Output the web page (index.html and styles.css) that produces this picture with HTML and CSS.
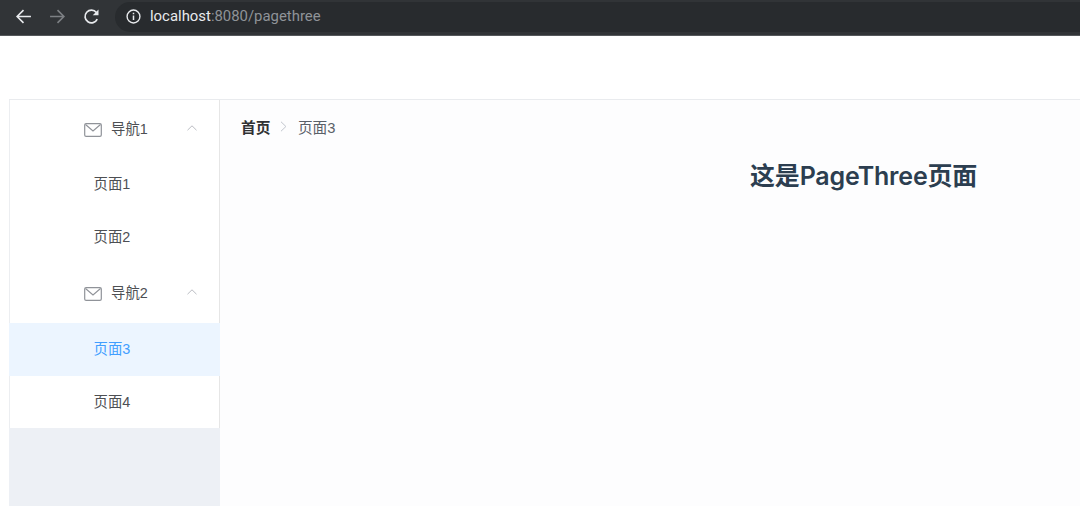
FILE: index.html
```html
<!DOCTYPE html>
<html lang="zh">
<head>
<meta charset="utf-8">
<title>pagethree</title>
<link rel="stylesheet" href="styles.css">
</head>
<body>
<header class="chrome">
  <svg class="nav-icon" viewBox="0 0 16 16"><path d="M15 8H2M8 2L2 8l6 6" fill="none" stroke="#e8eaed" stroke-width="1.5"/></svg>
  <svg class="nav-icon dim" viewBox="0 0 16 16"><path d="M1 8h13M8 2l6 6-6 6" fill="none" stroke="#7d8084" stroke-width="1.5"/></svg>
  <svg class="nav-icon" viewBox="0 0 16 16"><path d="M13.4 10.5A6 6 0 1 1 12.6 4.2" fill="none" stroke="#e8eaed" stroke-width="1.6"/><path d="M14.6 1.4v5.4H9.2z" fill="#e8eaed"/></svg>
  <div class="omnibox">
    <svg class="info" viewBox="0 0 14 14"><circle cx="7" cy="7" r="6" fill="none" stroke="#e8eaed" stroke-width="1.3"/><path d="M7 6v4.2M7 3.6v1.4" stroke="#e8eaed" stroke-width="1.4"/></svg>
    <span class="host">localhost</span><span class="path">:8080/pagethree</span>
  </div>
</header>
<main class="page">
  <aside class="sidebar">
    <ul class="menu">
      <li class="menu-title">
        <svg class="mail" viewBox="0 0 18 14"><rect x="0.7" y="0.7" width="16.6" height="12.6" rx="1.4" fill="none" stroke="#909399" stroke-width="1.2"/><path d="M1.5 1.5L9 8l7.5-6.5" fill="none" stroke="#909399" stroke-width="1.1"/></svg>
        <span class="title-text">导航1</span>
        <svg class="caret" viewBox="0 0 10 6"><path d="M.5 5.2L5 .8l4.5 4.4" fill="none" stroke="#a8abb2" stroke-width="0.8"/></svg>
      </li>
      <li class="menu-item">页面1</li>
      <li class="menu-item">页面2</li>
      <li class="menu-title">
        <svg class="mail" viewBox="0 0 18 14"><rect x="0.7" y="0.7" width="16.6" height="12.6" rx="1.4" fill="none" stroke="#909399" stroke-width="1.2"/><path d="M1.5 1.5L9 8l7.5-6.5" fill="none" stroke="#909399" stroke-width="1.1"/></svg>
        <span class="title-text">导航2</span>
        <svg class="caret" viewBox="0 0 10 6"><path d="M.5 5.2L5 .8l4.5 4.4" fill="none" stroke="#a8abb2" stroke-width="0.8"/></svg>
      </li>
      <li class="menu-item active">页面3</li>
      <li class="menu-item">页面4</li>
    </ul>
  </aside>
  <section class="content">
    <nav class="crumbs">
      <span class="crumb-home">首页</span>
      <svg class="crumb-sep" viewBox="0 0 6 10"><path d="M.7.7L5.2 5 .7 9.3" fill="none" stroke="#c0c4cc" stroke-width="0.9"/></svg>
      <span class="crumb-current">页面3</span>
    </nav>
    <h1 class="heading">这是PageThree页面</h1>
  </section>
</main>
</body>
</html>
```
FILE: styles.css
```css
* { box-sizing: border-box; }
html, body { margin: 0; padding: 0; }
body {
  width: 1080px;
  height: 506px;
  overflow: hidden;
  background: #fff;
  font-family: "Liberation Sans", "Noto Sans CJK SC", sans-serif;
}
.chrome {
  height: 36px;
  background: #313437;
  border-bottom: 1px solid #55585b;
  display: flex;
  align-items: center;
  padding: 0 0 2px 15px;
}
.nav-icon { width: 17px; height: 17px; margin-right: 17px; flex: none; }
.omnibox {
  height: 30px;
  flex: 1;
  margin-left: -2px;
  border-radius: 15px 0 0 15px;
  background: #282b2e;
  display: flex;
  align-items: center;
  padding: 0 0 2px 11px;
  font-family: "Roboto", sans-serif;
  font-size: 14.9px;
}
.info { width: 15px; height: 15px; margin-right: 9px; margin-top: 1px; }
.host { color: #e8eaed; }
.path { color: #8f9398; }
.page {
  display: flex;
  margin: 63px 0 0 9px;
  height: 407px;
  border-top: 1px solid #e9ebee;
}
.sidebar {
  width: 211px;
  flex: none;
  background: #edf0f5;
}
.menu {
  list-style: none;
  margin: 0;
  padding: 0;
  background: #fff;
  border-left: 1px solid #eceef1;
  border-right: 1px solid #e6e6e6;
  height: 328px;
  display: grid;
  grid-template-rows: 58px 52.5px 52.5px 60px 52.5px 52.5px;
  color: #4d4f53;
  font-size: 14.4px;
}
.menu-title {
  display: flex;
  align-items: center;
  padding: 0 0 3px 74px;
}
.menu-item {
  display: flex;
  align-items: center;
  padding: 0 0 3px 83.5px;
}
.mail { width: 18px; height: 14px; flex: none; margin-top: 5px; }
.title-text { margin-left: 9px; }
.caret { width: 10px; height: 6px; margin: 1px 0 0 39px; flex: none; }
.menu-item.active { background: #ecf5ff; color: #409eff; margin: 0 -1px; padding-left: 84.5px; }
.content {
  flex: 1;
  background: #fdfdfe;
  padding: 18px 0 0 21px;
}
.crumbs {
  display: flex;
  align-items: center;
  height: 17px;
  font-size: 14.7px;
}
.crumb-home { font-weight: 700; color: #303133; }
.crumb-sep { width: 7px; height: 11px; margin: 0 10.5px 0 10px; }
.crumb-current { color: #5a6068; }
.heading {
  margin: 23px 0 0;
  padding-left: 509px;
  font-family: "Inter", "Noto Sans CJK SC", sans-serif;
  font-size: 25px;
  letter-spacing: -0.18px;
  line-height: 36px;
  font-weight: 600;
  color: #2c3e50;
  white-space: nowrap;
}
```
